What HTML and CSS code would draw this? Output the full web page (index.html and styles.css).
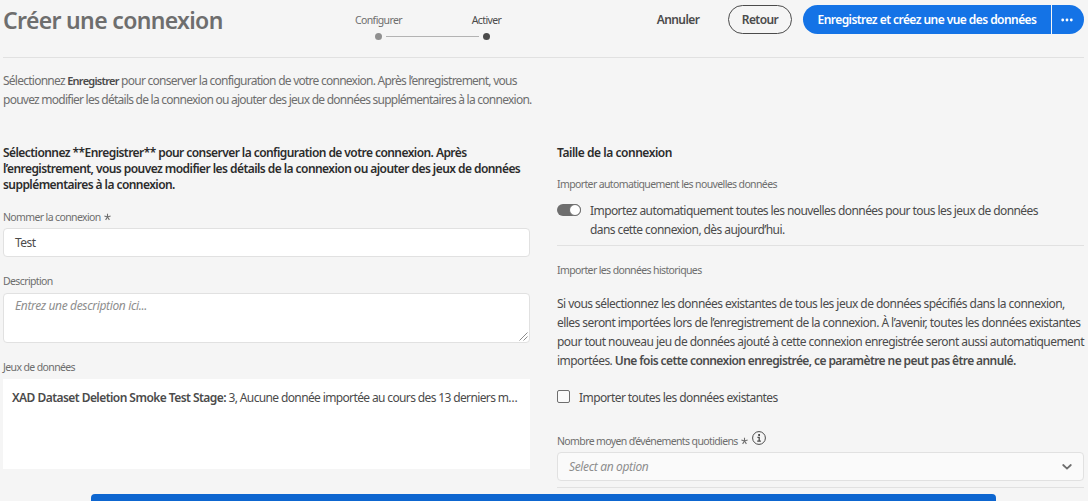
FILE: index.html
```html
<!DOCTYPE html>
<html lang="fr">
<head>
<meta charset="utf-8">
<title>Créer une connexion</title>
<link rel="stylesheet" href="styles.css">
</head>
<body>
<div class="page">
  <header class="header">
    <h1 class="title"><span>Créer une connexion</span></h1>
    <div class="steps">
      <div class="step"><span>Configurer</span><i class="dot"></i></div>
      <i class="track"></i>
      <div class="step current"><span>Activer</span><i class="dot"></i></div>
    </div>
    <div class="actions">
      <button class="btn quiet"><span>Annuler</span></button>
      <button class="btn outline"><span>Retour</span></button>
      <div class="split">
        <button class="btn cta"><span>Enregistrez et créez une vue des données</span></button>
        <button class="btn more" aria-label="Plus"><svg width="12" height="4" viewBox="0 0 12 4" fill="#fff"><circle cx="1.7" cy="2" r="1.4"/><circle cx="6" cy="2" r="1.4"/><circle cx="10.3" cy="2" r="1.4"/></svg></button>
      </div>
    </div>
  </header>
  <p class="intro"><span>Sélectionnez <b>Enregistrer</b> pour conserver la configuration de votre connexion. Après l’enregistrement, vous</span><br><span>pouvez modifier les détails de la connexion ou ajouter des jeux de données supplémentaires à la connexion.</span></p>
  <main class="columns">
    <section class="col">
      <h2 class="heading"><span>Sélectionnez **Enregistrer** pour conserver la configuration de votre connexion. Après</span><br><span>l’enregistrement, vous pouvez modifier les détails de la connexion ou ajouter des jeux de données</span><br><span>supplémentaires à la connexion.</span></h2>
      <div class="label name-label"><span>Nommer la connexion</span><svg class="star" width="7" height="8" viewBox="0 0 7 8"><path d="M3.5 4V.7M3.5 4L.4 3M3.5 4l3.1-1M3.5 4L1.6 6.9M3.5 4l1.9 2.9"/></svg></div>
      <div class="field"><span>Test</span></div>
      <div class="label desc-label"><span>Description</span></div>
      <div class="field area"><em>Entrez une description ici...</em><svg class="grip" width="9" height="9" viewBox="0 0 9 9"><path d="M.5 8.5l8-8M4.5 8.5l4-4"/></svg></div>
      <div class="label data-label"><span>Jeux de données</span></div>
      <div class="datasets"><b>XAD Dataset Deletion Smoke Test Stage:</b> <span>3, Aucune donnée importée au cours des 13 derniers m…</span></div>
    </section>
    <section class="col">
      <h2 class="heading size-heading"><span>Taille de la connexion</span></h2>
      <div class="label auto-label"><span>Importer automatiquement les nouvelles données</span></div>
      <div class="toggle-row">
        <i class="switch"></i>
        <div class="body"><span>Importez automatiquement toutes les nouvelles données pour tous les jeux de données</span><br><span>dans cette connexion, dès aujourd’hui.</span></div>
      </div>
      <div class="label hist-label"><span>Importer les données historiques</span></div>
      <p class="body history"><span>Si vous sélectionnez les données existantes de tous les jeux de données spécifiés dans la connexion,</span><br><span>elles seront importées lors de l’enregistrement de la connexion. À l’avenir, toutes les données existantes</span><br><span>pour tout nouveau jeu de données ajouté à cette connexion enregistrée seront aussi automatiquement</span><br><span>importées. </span><b>Une fois cette connexion enregistrée, ce paramètre ne peut pas être annulé.</b></p>
      <div class="check-row body"><i class="box"></i><span>Importer toutes les données existantes</span></div>
      <div class="label avg-label"><span>Nombre moyen d’événements quotidiens</span><svg class="star" width="7" height="8" viewBox="0 0 7 8"><path d="M3.5 4V.7M3.5 4L.4 3M3.5 4l3.1-1M3.5 4L1.6 6.9M3.5 4l1.9 2.9"/></svg><svg class="info" width="14" height="14" viewBox="0 0 14 14"><circle cx="7" cy="7" r="6.4"/><path class="stem" d="M5.4 6.3h1.8v3.7M5.2 10.2h3.7"/><path class="tittle" d="M6.2 3.1h1.8v1.8H6.2z"/></svg></div>
      <div class="field select"><em>Select an option</em><svg width="10" height="6" viewBox="0 0 10 6"><path d="M1.2 1L5 4.6 8.8 1"/></svg></div>
      <hr class="rule">
    </section>
  </main>
  <div class="banner"></div>
</div>
</body>
</html>
```
FILE: styles.css
```css
* { box-sizing: border-box; }
body { margin: 0; background: #f5f5f5; color: #4b4b4b; font: 12px/19px "Noto Sans", "Open Sans", sans-serif; }
.page { position: relative; height: 501px; overflow: hidden; padding: 0 4px 0 3px; white-space: nowrap; }
h1, h2, p { margin: 0; }
b { font-weight: 600; }

.header { display: flex; height: 58px; border-bottom: 1px solid #e1e1e1; }
.title { width: 353px; font-size: 23px; line-height: 41px; font-weight: 600; color: #6e6e6e; letter-spacing: -.66px; }
.steps { display: flex; padding-top: 11px; font-size: 10.5px; line-height: 18px; letter-spacing: -.6px; color: #6e6e6e; }
.step { display: flex; flex-direction: column; align-items: center; flex: none; width: 45px; gap: 4px; }
.current { width: 31px; color: #4b4b4b; }
.dot { flex: none; width: 7px; height: 7px; border-radius: 50%; background: #909090; }
.current .dot { background: #4b4b4b; }
.track { flex: none; width: 93px; height: 1px; margin: 25px -8px 0 -15px; background: #b3b3b3; }

.actions { display: flex; margin-left: auto; padding-top: 5px; }
.btn { height: 29px; padding: 0; border: 0; background: none; font: 600 12px/27px "Noto Sans", sans-serif; letter-spacing: -.56px; color: #4b4b4b; }
.quiet { width: 44px; margin-right: 28px; }
.outline { width: 64px; margin-right: 11px; border: 1px solid #4b4b4b; border-radius: 15px; line-height: 25px; }
.split { display: flex; gap: 1px; }
.cta { width: 248px; background: #1473e6; color: #fff; border-radius: 15px 0 0 15px; }
.more { display: flex; align-items: center; width: 32px; padding-left: 9px; background: #1473e6; border-radius: 0 15px 15px 0; }

.intro { height: 38px; margin-top: 13px; color: #6e6e6e; letter-spacing: -.75px; }
.intro b { color: #4b4b4b; font-size: 11px; line-height: 1; }
.columns { display: grid; grid-template-columns: 527px 527px; gap: 27px; margin-top: 36px; }
.heading { font-size: 12px; line-height: 16px; font-weight: 600; color: #2c2c2c; letter-spacing: -.56px; }
.size-heading { letter-spacing: -.46px; }
.label { display: flex; height: 16px; font-size: 10.5px; line-height: 16px; color: #6e6e6e; letter-spacing: -.62px; }
.name-label { margin-top: 16px; }
.star { margin: 4px 0 0 3px; fill: none; stroke: #6e6e6e; stroke-width: 1.1; }
.field { display: flex; align-items: center; height: 29px; margin-top: 3px; padding: 0 11px; border: 1px solid #e1e1e1; border-radius: 4px; background: #fff; letter-spacing: -.5px; }
.field em { color: #8e8e8e; letter-spacing: -.35px; }
.desc-label { margin-top: 16px; }
.area { position: relative; height: 50px; margin-top: 4px; align-items: flex-start; padding-top: 2px; }
.grip { position: absolute; right: 1px; bottom: 1px; fill: none; stroke: #6e6e6e; stroke-width: .8; }
.data-label { margin-top: 16px; }
.datasets { height: 90px; margin-top: 4px; padding: 9px; background: #fff; letter-spacing: -.63px; }
.datasets b { letter-spacing: -.55px; }

.auto-label { margin-top: 15px; }
.toggle-row { display: flex; gap: 9px; height: 45px; margin-top: 9px; border-bottom: 1px solid #e1e1e1; }
.switch { flex: none; width: 24px; height: 12px; margin-top: 3px; border-radius: 6px; background: #6e6e6e; }
.switch::after { content: ""; display: block; box-sizing: border-box; width: 12px; height: 12px; margin-left: 12px; border: 1px solid #6e6e6e; border-radius: 50%; background: #fff; }
.body { letter-spacing: -.58px; }
.hist-label { margin-top: 16px; }
.history { margin-top: 16px; letter-spacing: -.55px; }
.history b { letter-spacing: -.59px; }
.check-row { display: flex; gap: 9px; margin-top: 18px; }
.box { width: 13px; height: 13px; margin-top: 2px; border: 1px solid #6e6e6e; border-radius: 2px; background: #fafafa; }
.avg-label { margin-top: 26px; }
.info { margin: -2px 0 0 4px; fill: none; stroke: #4b4b4b; stroke-width: 1; }
.info .stem { stroke-width: 1.3; }
.info .tittle { fill: #4b4b4b; stroke: none; }
.select { justify-content: space-between; background: #fafafa; }
.select svg { fill: none; stroke: #6e6e6e; stroke-width: 1.8; stroke-linecap: round; }
.rule { height: 1px; margin: 6px 0 0; border: 0; background: #e1e1e1; }
.banner { position: absolute; left: 91px; top: 494px; width: 905px; height: 20px; border-radius: 4px; background: #0d66d0; }
```
